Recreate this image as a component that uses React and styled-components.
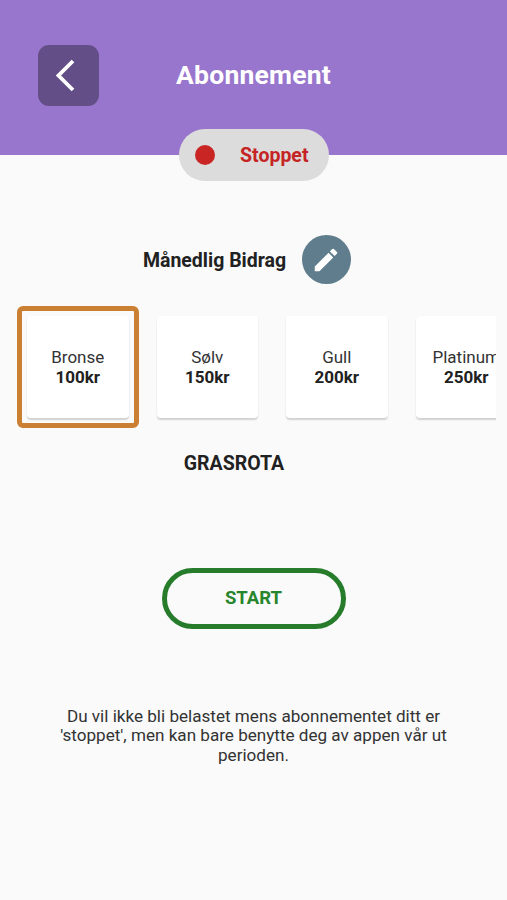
import React from "react";
import styled, { createGlobalStyle } from "styled-components";
import { MdEdit } from "react-icons/md";

const GlobalStyle = createGlobalStyle`
  * {
    box-sizing: border-box;
  }

  body {
    margin: 0;
    background: #fafafa;
    font-family: Roboto, "Liberation Sans", sans-serif;
    color: #212121;
  }

  button {
    font-family: inherit;
    padding: 0;
  }
`;

const Page = styled.div`
  display: flex;
  flex-direction: column;
  height: 900px;
  overflow: hidden;
`;

const Header = styled.header`
  display: grid;
  grid-template-columns: 61px 1fr 61px;
  align-items: start;
  height: 154.5px;
  padding: 44.5px 37.5px 0;
  background: #9876cd;
`;

const BackButton = styled.button`
  display: flex;
  align-items: center;
  height: 61px;
  padding-left: 18px;
  border: none;
  border-radius: 11px;
  background: #644e87;
  color: #fff;
`;

const Title = styled.h1`
  margin: 0;
  line-height: 59px;
  text-align: center;
  font-size: 26.5px;
  font-weight: 700;
  letter-spacing: 0.2px;
  color: #fff;
`;

const Status = styled.div`
  display: flex;
  align-items: center;
  align-self: center;
  justify-content: space-between;
  width: 150px;
  height: 51.5px;
  margin-top: -25.5px;
  padding: 1px 20px 0 16px;
  border-radius: 26px;
  background: #dcdcdc;
  color: #c62424;
  font-size: 19.5px;
  font-weight: 700;
`;

const Dot = styled.span`
  width: 20px;
  height: 20px;
  margin-top: -1px;
  border-radius: 50%;
  background: #c92525;
`;

const AmountRow = styled.div`
  display: flex;
  align-items: center;
  justify-content: center;
  gap: 15.5px;
  margin-top: 54.5px;
  padding-right: 13.5px;
`;

const Heading = styled.h2`
  margin: 0;
  padding-top: 2px;
  font-size: 19.5px;
  font-weight: 700;
`;

const EditButton = styled.button`
  display: flex;
  align-items: center;
  justify-content: center;
  width: 49px;
  height: 49px;
  border: none;
  border-radius: 50%;
  background: #5f7d8c;
  color: #fff;
  font-size: 30px;
`;

const PlanList = styled.div`
  display: flex;
  gap: 8px;
  margin: 21.5px 11px 0 17px;
  overflow: hidden;
`;

const PlanFrame = styled.div`
  flex: none;
  width: 121.5px;
  height: 122px;
  padding: 5px;
  border: 5px solid ${({ $selected }) => ($selected ? "#cb7f32" : "transparent")};
  border-radius: 6px;
`;

const PlanCard = styled.div`
  display: flex;
  flex-direction: column;
  align-items: center;
  justify-content: center;
  height: 102px;
  border-radius: 4px;
  background: #fff;
  box-shadow: 0 1.5px 1.5px rgba(0, 0, 0, 0.16);
  font-size: 17px;
  line-height: 20px;
  color: #333;

  strong {
    color: #212121;
  }
`;

const Grasrota = styled(Heading)`
  margin-top: 22px;
  padding-right: 39px;
  line-height: 24px;
  text-align: center;
`;

const StartButton = styled.button`
  align-self: center;
  width: 184px;
  height: 61px;
  margin-top: 92px;
  border: 5px solid #277c2c;
  border-radius: 31px;
  background: transparent;
  color: #27852c;
  font-size: 18.5px;
  font-weight: 700;
`;

const Notice = styled.p`
  width: 400px;
  margin: 78px auto 0;
  text-align: center;
  font-size: 17.1px;
  line-height: 19.7px;
  color: #333;
`;

const BackIcon = () => (
  <svg width="19" height="33" viewBox="0 0 19 33" fill="none">
    <path d="M17 2 L2.5 16.5 L17 31" stroke="currentColor" strokeWidth="3.8" />
  </svg>
);

const plans = [
  { name: "Bronse", price: "100kr" },
  { name: "Sølv", price: "150kr" },
  { name: "Gull", price: "200kr" },
  { name: "Platinum", price: "250kr" },
];

const App = () => {
  return (
    <Page>
      <GlobalStyle />
      <Header>
        <BackButton>
          <BackIcon />
        </BackButton>
        <Title>Abonnement</Title>
      </Header>
      <Status>
        <Dot />
        Stoppet
      </Status>

      <AmountRow>
        <Heading>Månedlig Bidrag</Heading>
        <EditButton>
          <MdEdit />
        </EditButton>
      </AmountRow>

      <PlanList>
        {plans.map((plan) => (
          <PlanFrame key={plan.name} $selected={plan.name === "Bronse"}>
            <PlanCard>
              <span>{plan.name}</span>
              <strong>{plan.price}</strong>
            </PlanCard>
          </PlanFrame>
        ))}
      </PlanList>

      <Grasrota>GRASROTA</Grasrota>
      <StartButton>START</StartButton>
      <Notice>
        Du vil ikke bli belastet mens abonnementet ditt er 'stoppet', men kan
        bare benytte deg av appen vår ut perioden.
      </Notice>
    </Page>
  );
};

export default App;
